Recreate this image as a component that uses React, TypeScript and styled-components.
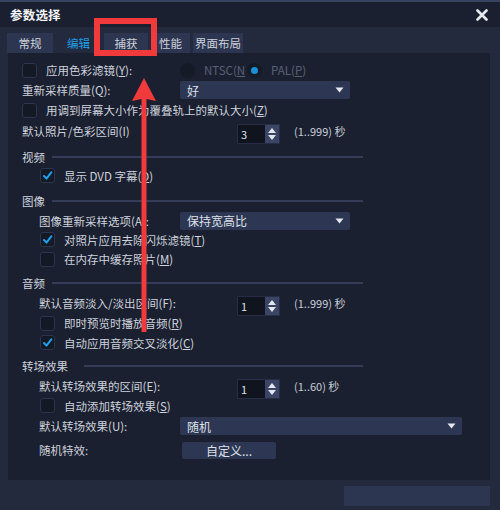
import React from "react";
import styled, { createGlobalStyle } from "styled-components";

const Global = createGlobalStyle`
  html, body { margin: 0; padding: 0; background: #232a3e; }
  * { box-sizing: border-box; }
`;

const FONT = `"Noto Sans CJK SC", "Noto Sans", sans-serif`;

const Window = styled.div`
  position: relative;
  width: 500px;
  height: 510px;
  background: #232a3e;
  border-top: 2px solid #3a4262;
  display: flex;
  flex-direction: column;
  font-family: ${FONT};
  font-size: 11.5px;
  color: #cdd2dc;
  overflow: hidden;
`;

const TitleBar = styled.div`
  height: 25px;
  background: #1b2030;
  display: flex;
  align-items: center;
  justify-content: space-between;
  padding: 0 12px 0 10px;
`;

const Title = styled.div`
  font-size: 12.5px;
  font-weight: 700;
  color: #f2f4f8;
  letter-spacing: 0.2px;
`;

const TabBand = styled.div`
  height: 26px;
  display: flex;
  align-items: flex-end;
  gap: 3px;
  padding-left: 7px;
`;

const Tab = styled.div<{ $active?: boolean; $w: number }>`
  width: ${(p) => p.$w}px;
  height: 20px;
  display: flex;
  align-items: center;
  justify-content: center;
  background: ${(p) => (p.$active ? "transparent" : "#2d3651")};
  color: ${(p) => (p.$active ? "#1f9de3" : "#cdd2dc")};
`;

const Main = styled.div`
  flex: 1;
  display: flex;
  padding: 0 10px 0 8px;
`;

const Panel = styled.div`
  flex: 1;
  background: #1b2030;
  padding: 7px 0 0 14px;
  display: flex;
  flex-direction: column;
`;

const Row = styled.div<{ $h?: number; $mt?: number; $indent?: number }>`
  height: ${(p) => p.$h ?? 20}px;
  margin-top: ${(p) => p.$mt ?? 0}px;
  padding-left: ${(p) => p.$indent ?? 0}px;
  display: flex;
  align-items: center;
  white-space: nowrap;
`;

const Label = styled.span<{ $w?: number; $dim?: boolean }>`
  ${(p) => (p.$w ? `width: ${p.$w}px; flex: none;` : "")}
  color: ${(p) => (p.$dim ? "#596074" : "#cdd2dc")};
`;

const U = styled.span`
  text-decoration: underline;
  text-underline-offset: 1px;
`;

const Box = styled.div`
  width: 15px;
  height: 15px;
  flex: none;
  border-radius: 3px;
  background: #141926;
  border: 1px solid #2c3450;
  margin-right: 9px;
  display: flex;
  align-items: center;
  justify-content: center;
`;

const CheckBox = ({ checked }: { checked?: boolean }) => (
  <Box>
    {checked && (
      <svg width="11" height="11" viewBox="0 0 11 11">
        <path d="M2 6 L4.5 8.6 L9.3 2.4" fill="none" stroke="#1ea2ee" strokeWidth="2" strokeLinecap="round" strokeLinejoin="round" />
      </svg>
    )}
  </Box>
);

const RadioCircle = styled.div<{ $ml?: number }>`
  width: 15px;
  height: 15px;
  flex: none;
  border-radius: 50%;
  background: #151a27;
  margin-left: ${(p) => p.$ml ?? 0}px;
  margin-right: 9px;
  display: flex;
  align-items: center;
  justify-content: center;
`;

const RadioDot = styled.div`
  width: 7px;
  height: 7px;
  border-radius: 50%;
  background: #1b8fd6;
`;

const Select = styled.div<{ $w: number }>`
  width: ${(p) => p.$w}px;
  height: 18px;
  background: #2d3652;
  border-radius: 2px;
  display: flex;
  align-items: center;
  justify-content: space-between;
  padding: 0 6px 0 7px;
  color: #dde1e8;
  font-size: 12px;
`;

const Caret = () => (
  <svg width="9" height="6" viewBox="0 0 9 6">
    <path d="M0.5 0.5 H8.5 L4.5 5.5 Z" fill="#e4e7ee" />
  </svg>
);

const SpinWrap = styled.div`
  display: flex;
  height: 20px;
  margin-top: 6px;
  border: 1px solid #262d44;
  flex: none;
`;

const SpinInput = styled.div`
  width: 27px;
  background: #10141f;
  display: flex;
  align-items: center;
  padding-left: 3px;
  color: #dde1e8;
  font-size: 11px;
`;

const SpinBtns = styled.div`
  width: 14px;
  background: #3a4565;
  display: flex;
  flex-direction: column;
  align-items: center;
  justify-content: center;
  gap: 2px;
`;

const Spin = ({ value }: { value: string }) => (
  <SpinWrap>
    <SpinInput>{value}</SpinInput>
    <SpinBtns>
      <svg width="8" height="5" viewBox="0 0 8 5"><path d="M0 5 L4 0 L8 5 Z" fill="#e4e7ee" /></svg>
      <svg width="8" height="5" viewBox="0 0 8 5"><path d="M0 0 L8 0 L4 5 Z" fill="#e4e7ee" /></svg>
    </SpinBtns>
  </SpinWrap>
);

const Range = styled.span`
  margin-left: 14px;
  color: #c6cbd5;
  font-size: 11px;
`;

const Header = styled.div<{ $mt?: number; $h?: number }>`
  width: 341px;
  height: ${(p) => p.$h ?? 20}px;
  margin-top: ${(p) => p.$mt ?? 0}px;
  display: flex;
  align-items: center;
`;

const HeaderLine = styled.div<{ $ml: number }>`
  flex: 1;
  height: 2px;
  margin-left: ${(p) => p.$ml}px;
  background: #343c58;
`;

const SmallButton = styled.div`
  width: 94px;
  height: 17px;
  margin-left: 2px;
  background: #2d3652;
  border-radius: 2px;
  display: flex;
  align-items: center;
  justify-content: center;
  color: #dde1e8;
  font-size: 12px;
`;

const Footer = styled.div`
  height: 30px;
  display: flex;
  justify-content: flex-end;
  align-items: center;
  padding: 2px 10px 0 0;
`;

const FooterButton = styled.div`
  width: 146px;
  height: 20px;
  background: #2d3651;
`;

const Overlay = styled.svg`
  position: absolute;
  left: 0;
  top: -2px;
  pointer-events: none;
`;

const Close = () => (
  <svg width="12" height="12" viewBox="0 0 12 12">
    <path d="M1.5 1.5 L10.5 10.5 M10.5 1.5 L1.5 10.5" stroke="#e6e9ef" strokeWidth="2.6" strokeLinecap="round" />
  </svg>
);

export default function App() {
  return (
    <>
      <Global />
      <Window>
        <TitleBar>
          <Title>参数选择</Title>
          <Close />
        </TitleBar>
        <TabBand>
          <Tab $w={46}>常规</Tab>
          <Tab $w={45} $active>编辑</Tab>
          <Tab $w={44}>捕获</Tab>
          <Tab $w={39}>性能</Tab>
          <Tab $w={50}>界面布局</Tab>
        </TabBand>
        <Main>
          <Panel>
            <Row>
              <Label $w={158} as="div" style={{ display: "flex", alignItems: "center" }}>
                <CheckBox />
                应用色彩滤镜(<U>Y</U>):
              </Label>
              <RadioCircle />
              <Label $dim>NTSC(<U>N</U></Label>
              <RadioCircle $ml={2}><RadioDot /></RadioCircle>
              <Label $dim>PAL(<U>P</U>)</Label>
            </Row>
            <Row>
              <Label $w={158}>重新采样质量(Q):</Label>
              <Select $w={170}>好<Caret /></Select>
            </Row>
            <Row>
              <CheckBox />
              <Label>用调到屏幕大小作为覆叠轨上的默认大小(<U>Z</U>)</Label>
            </Row>
            <Row $mt={1}>
              <Label $w={215}>默认照片/色彩区间(I)</Label>
              <Spin value="3" />
              <Range>(1..999) 秒</Range>
            </Row>

            <Header $mt={6} $h={19}>
              视频
              <HeaderLine $ml={7} />
            </Header>
            <Row $h={19} $indent={18}>
              <CheckBox checked />
              <Label>显示 DVD 字幕(<U>D</U>)</Label>
            </Row>

            <Header $mt={6}>
              图像
              <HeaderLine $ml={7} />
            </Header>
            <Row $h={19} $indent={17}>
              <Label $w={141}>图像重新采样选项(A):</Label>
              <Select $w={170}>保持宽高比<Caret /></Select>
            </Row>
            <Row $h={19} $indent={18}>
              <CheckBox checked />
              <Label>对照片应用去除闪烁滤镜(<U>T</U>)</Label>
            </Row>
            <Row $indent={18}>
              <CheckBox />
              <Label>在内存中缓存照片(<U>M</U>)</Label>
            </Row>

            <Header $mt={4}>
              音频
              <HeaderLine $ml={7} />
            </Header>
            <Row $indent={17}>
              <Label $w={198}>默认音频淡入/淡出区间(F):</Label>
              <Spin value="1" />
              <Range>(1..999) 秒</Range>
            </Row>
            <Row $indent={18}>
              <CheckBox />
              <Label>即时预览时播放音频(<U>R</U>)</Label>
            </Row>
            <Row $h={19} $indent={18}>
              <CheckBox checked />
              <Label>自动应用音频交叉淡化(<U>C</U>)</Label>
            </Row>

            <Header $mt={4}>
              转场效果
              <HeaderLine $ml={16} />
            </Header>
            <Row $indent={17}>
              <Label $w={198}>默认转场效果的区间(E):</Label>
              <Spin value="1" />
              <Range>(1..60) 秒</Range>
            </Row>
            <Row $h={19} $indent={18}>
              <CheckBox />
              <Label>自动添加转场效果(<U>S</U>)</Label>
            </Row>
            <Row $mt={1} $indent={17}>
              <Label $w={141}>默认转场效果(U):</Label>
              <Select $w={282}>随机<Caret /></Select>
            </Row>
            <Row $mt={4} $indent={17}>
              <Label $w={141}>随机特效:</Label>
              <SmallButton>自定义...</SmallButton>
            </Row>
          </Panel>
        </Main>
        <Footer>
          <FooterButton />
        </Footer>

        <Overlay width="500" height="510" viewBox="0 0 500 510">
          <rect x="97" y="21" width="57" height="32" fill="none" stroke="#f03a3c" strokeWidth="6" />
          <path d="M144 78 L156 101 L146.5 99 L146.5 332 L141.5 332 L141.5 99 L132 101 Z" fill="#f03a3c" />
        </Overlay>
      </Window>
    </>
  );
}
